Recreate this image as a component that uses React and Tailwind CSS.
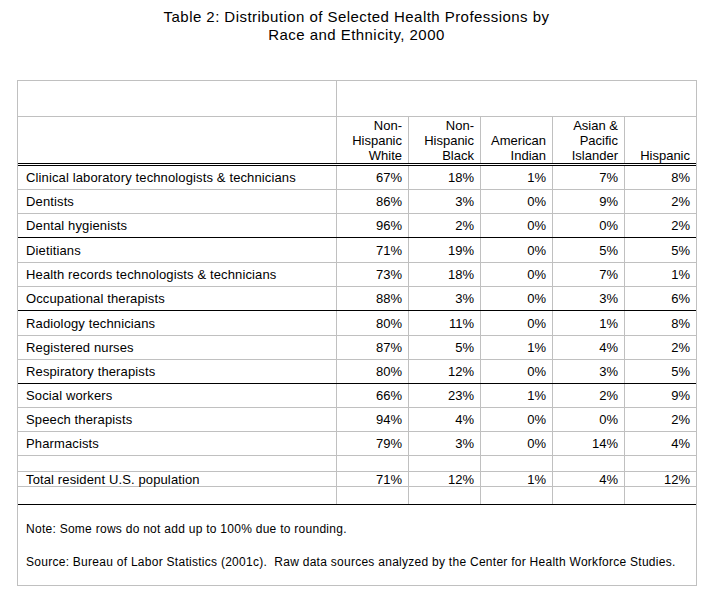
const cols = "grid grid-cols-[319px_72px_72px_72px_72px_71px]";

const rows = [
  { name: "Clinical laboratory technologists & technicians", v: ["67%", "18%", "1%", "7%", "8%"], h: "h-[24px]", line: "gray" },
  { name: "Dentists", v: ["86%", "3%", "0%", "9%", "2%"], h: "h-[24px]", line: "gray" },
  { name: "Dental hygienists", v: ["96%", "2%", "0%", "0%", "2%"], h: "h-[24px]", line: "black" },
  { name: "Dietitians", v: ["71%", "19%", "0%", "5%", "5%"], h: "h-[25px]", line: "gray" },
  { name: "Health records technologists & technicians", v: ["73%", "18%", "0%", "7%", "1%"], h: "h-[24px]", line: "gray" },
  { name: "Occupational therapists", v: ["88%", "3%", "0%", "3%", "6%"], h: "h-[24px]", line: "black" },
  { name: "Radiology technicians", v: ["80%", "11%", "0%", "1%", "8%"], h: "h-[25px]", line: "gray" },
  { name: "Registered nurses", v: ["87%", "5%", "1%", "4%", "2%"], h: "h-[24px]", line: "gray" },
  { name: "Respiratory therapists", v: ["80%", "12%", "0%", "3%", "5%"], h: "h-[24px]", line: "black" },
  { name: "Social workers", v: ["66%", "23%", "1%", "2%", "9%"], h: "h-[24px]", line: "gray" },
  { name: "Speech therapists", v: ["94%", "4%", "0%", "0%", "2%"], h: "h-[24px]", line: "gray" },
  { name: "Pharmacists", v: ["79%", "3%", "0%", "14%", "4%"], h: "h-[24px]", line: "gray" },
  { name: "", v: ["", "", "", "", ""], h: "h-[16px]", line: "gray" },
  { name: "Total resident U.S. population", v: ["71%", "12%", "1%", "4%", "12%"], h: "h-[15px]", line: "gray" },
  { name: "", v: ["", "", "", "", ""], h: "h-[18px]", line: "black" },
];

const heads = [
  ["Non-", "Hispanic", "White"],
  ["Non-", "Hispanic", "Black"],
  ["American", "Indian"],
  ["Asian &", "Pacific", "Islander"],
  ["Hispanic"],
];

function DataRow({ row }) {
  const lineCls = row.line === "black" ? "border-b border-black" : "border-b border-[#c0c0c0]";
  return (
    <div className={`${cols} ${row.h} ${lineCls}`}>
      <div className="flex items-center pl-[8px] border-r border-[#c0c0c0] text-[13px] leading-[15px] tracking-[0.13px] whitespace-nowrap">
        {row.name}
      </div>
      {row.v.map((val, i) => (
        <div
          key={i}
          className={`flex items-center justify-end pr-[6px] text-[13px] leading-[15px] ${i < 4 ? "border-r border-[#c0c0c0]" : ""}`}
        >
          {val}
        </div>
      ))}
    </div>
  );
}

export default function App() {
  return (
    <div className="w-[713px] h-[606px] bg-white text-black font-['Liberation_Sans',Arial,sans-serif] overflow-hidden">
      <div className="pt-[8px] text-center text-[15px] leading-[18px] tracking-[0.45px]">
        <div>Table 2: Distribution of Selected Health Professions by</div>
        <div>Race and Ethnicity, 2000</div>
      </div>

      <div className="ml-[17px] mt-[36px] w-[680px] border border-[#c0c0c0]">
        {/* blank top header row */}
        <div className="grid grid-cols-[319px_359px] h-[36px] border-b border-[#c0c0c0]">
          <div className="border-r border-[#c0c0c0]" />
          <div />
        </div>

        {/* column headings */}
        <div className={`${cols} h-[49px] border-b-[3px] border-double border-black`}>
          <div className="border-r border-[#c0c0c0]" />
          {heads.map((lines, i) => (
            <div
              key={i}
              className={`flex flex-col items-end justify-end pr-[6px] text-[13px] leading-[15px] ${i < 4 ? "border-r border-[#c0c0c0]" : ""}`}
            >
              {lines.map((l) => (
                <div key={l}>{l}</div>
              ))}
            </div>
          ))}
        </div>

        {rows.map((row, i) => (
          <DataRow key={i} row={row} />
        ))}

        {/* notes */}
        <div className="h-[80px] pl-[8px] pt-[16px] flex flex-col gap-[17px] text-[12px] leading-[16px] tracking-[0.27px]">
          <div>Note: Some rows do not add up to 100% due to rounding.</div>
          <div>Source: Bureau of Labor Statistics (2001c).&nbsp; Raw data sources analyzed by the Center for Health Workforce Studies.</div>
        </div>
      </div>
    </div>
  );
}
